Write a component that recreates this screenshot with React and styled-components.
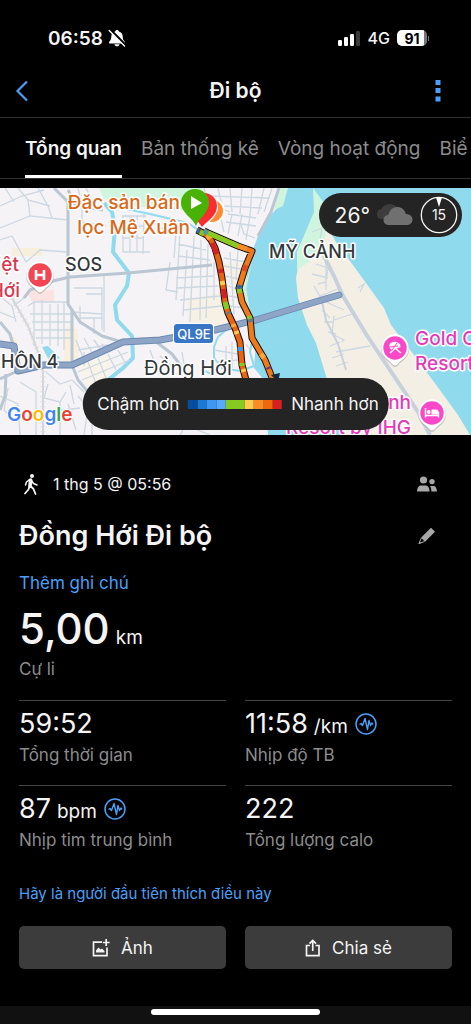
import React from 'react';
import styled, { createGlobalStyle } from 'styled-components';

const GlobalStyle = createGlobalStyle`
  * {
    box-sizing: border-box;
  }

  body {
    margin: 0;
    background: #000;
    color: #f4f4f4;
    font-family: Inter, "Liberation Sans", sans-serif;
  }

  button {
    font: inherit;
    color: inherit;
    background: none;
    border: none;
    padding: 0;
    cursor: pointer;
  }

  svg {
    display: block;
    flex-shrink: 0;
  }
`;

const Page = styled.div`
  display: flex;
  flex-direction: column;
  min-height: 100vh;
  overflow-x: hidden;
`;

const StatusBar = styled.div`
  display: flex;
  justify-content: space-between;
  align-items: center;
  height: 64px;
  padding: 12px 44px 0 48px;
`;

const StatusGroup = styled.div`
  display: flex;
  align-items: center;
  gap: ${(props) => props.$gap}px;
`;

const Clock = styled.span`
  font-size: 19px;
  font-weight: 600;
`;

const Network = styled.span`
  font-size: 16px;
  font-weight: 500;
`;

const Battery = styled.span`
  display: flex;
  align-items: center;
  justify-content: center;
  position: relative;
  width: 30px;
  height: 16px;
  border-radius: 5px;
  background: linear-gradient(to right, #fff 27px, #777 27px);
  color: #000;
  font-size: 14px;
  font-weight: 700;

  &::after {
    content: '';
    position: absolute;
    right: -2px;
    width: 1px;
    height: 5px;
    background: #777;
  }
`;

const Header = styled.header`
  display: grid;
  grid-template-columns: 1fr auto 1fr;
  align-items: center;
  height: 54px;
  padding: 0 30px 0 15px;
  border-bottom: 1px solid #333;

  button:last-child {
    justify-self: end;
  }

  button:first-child {
    justify-self: start;
  }
`;

const HeaderTitle = styled.h1`
  margin: 0;
  padding-left: 15px;
  font-size: 21px;
  line-height: 28px;
  font-weight: 600;
`;

const Tabs = styled.nav`
  display: flex;
  gap: 19px;
  height: 61px;
  padding-left: 25px;
  overflow: hidden;
  border-bottom: 1px solid #333;
`;

const Tab = styled.button`
  flex-shrink: 0;
  padding-top: 3px;
  border-bottom: 3px solid ${(props) => (props.$active ? '#fff' : 'transparent')};
  color: ${(props) => (props.$active ? '#f4f4f4' : '#8c8c8c')};
  font-size: 19px;
  font-weight: ${(props) => (props.$active ? 600 : 400)};
  white-space: nowrap;
`;

const MapBox = styled.section`
  position: relative;
  margin-top: 9px;
  overflow: hidden;
`;

const MapSvg = styled.svg`
  width: 100%;
  height: auto;
`;

const Weather = styled.div`
  position: absolute;
  top: 5px;
  right: 9px;
  display: flex;
  align-items: center;
  gap: 7px;
  height: 44px;
  padding: 0 4px 0 16px;
  border-radius: 22px;
  background: #242424;
  font-size: 21px;
`;

const Legend = styled.div`
  position: absolute;
  left: 50%;
  bottom: 5px;
  transform: translateX(-50%);
  display: flex;
  align-items: center;
  gap: 9px;
  height: 52px;
  padding: 0 10px 0 15px;
  border-radius: 26px;
  background: #242424;
  font-size: 17px;
  white-space: nowrap;
`;

const Scale = styled.div`
  display: flex;
  width: 94px;
  height: 9px;
`;

const ScaleStep = styled.span`
  flex: ${(props) => (props.$wide ? 2 : 1)};
  background: ${(props) => props.$color};
`;

const Content = styled.main`
  display: flex;
  flex-direction: column;
  flex: 1;
  padding: 37px 19px 37px;
`;

const Row = styled.div`
  display: flex;
  align-items: center;
  justify-content: space-between;
  padding-right: 15px;
`;

const TitleRow = styled(Row)`
  margin: 22px 0 17px;
`;

const Meta = styled.div`
  display: flex;
  align-items: center;
  gap: 12px;
  font-size: 16px;
  line-height: 24px;
`;

const ActivityTitle = styled.h2`
  margin: 0;
  font-size: 27px;
  line-height: 36px;
  font-weight: 600;
`;

const TextLink = styled.a`
  align-self: flex-start;
  color: #4aa0f8;
  font-size: ${(props) => (props.$small ? 15 : 17)}px;
  line-height: 24px;
  text-decoration: none;
`;

const Distance = styled.div`
  margin-top: 10px;
  font-size: 42px;
  line-height: 48px;
  font-weight: 500;
`;

const Unit = styled.span`
  margin-left: 6px;
  font-size: 19px;
  line-height: 1;
  font-weight: 400;
`;

const Label = styled.div`
  margin-top: ${(props) => props.$top}px;
  color: #8c8c8c;
  font-size: 17px;
  line-height: 24px;
`;

const Stats = styled.div`
  display: grid;
  grid-template-columns: 1fr 1fr;
  column-gap: 19px;
  margin: 19px 0 12px;
`;

const Stat = styled.div`
  padding: 7px 0 18px;
  border-top: 1px solid #444;
`;

const StatValue = styled.div`
  display: flex;
  align-items: center;
  gap: 7px;
  font-size: 27px;
  line-height: 32px;
`;

const Actions = styled.div`
  display: grid;
  grid-template-columns: 1fr 1fr;
  gap: 19px;
  margin-top: 20px;
`;

const ActionButton = styled.button`
  display: flex;
  align-items: center;
  justify-content: center;
  gap: 11px;
  height: 43px;
  border-radius: 5px;
  background: #3c3c3c;
  font-size: 17px;
`;

const HomeArea = styled.div`
  display: flex;
  justify-content: center;
  height: 18px;
  padding-top: 3px;
  background: #111;
`;

const HomeIndicator = styled.div`
  width: 36%;
  height: 6px;
  border-radius: 3px;
  background: #fff;
`;

const tabs = ['Tổng quan', 'Bản thống kê', 'Vòng hoạt động', 'Biể'];

const scale = [
  { color: '#064d9f' },
  { color: '#1c78d3' },
  { color: '#3f97f2' },
  { color: '#57a9fb' },
  { color: '#86cb22', wide: true },
  { color: '#ffcb4f' },
  { color: '#fb8d27' },
  { color: '#ee690c' },
  { color: '#d51f20' },
];

const stats = [
  { value: '59:52', label: 'Tổng thời gian' },
  { value: '11:58', unit: '/km', pulse: true, label: 'Nhịp độ TB' },
  { value: '87', unit: 'bpm', pulse: true, label: 'Nhịp tim trung bình' },
  { value: '222', label: 'Tổng lượng calo' },
];

const trackWest =
  'M197 230L207 235L211 240L215 248L219 262L222 278L225 302L228 313L235 328L240 342L242 365L246 380';
const trackEast =
  'M204 231L208 233L238 246L252 251L245 268L239 288L242 302L250 318L252 338L265 360L273 380';

// pieces of the track whose pace differs from the base orange
const paceBits = [
  ['M197 230L200 232', '#35628f'],
  ['M200 232L204 234', '#86cb22'],
  ['M207 235L210 239', '#ffa63a'],
  ['M212 243L217 254', '#d51f20'],
  ['M220 269L221 273', '#d51f20'],
  ['M222 281L223 285', '#ffcb4f'],
  ['M223 289L225 298', '#d51f20'],
  ['M225 302L227 309', '#86cb22'],
  ['M228 312L229 314', '#5e7c8c'],
  ['M233 324L234 327', '#ffa63a'],
  ['M236 331L237 334', '#ffcb4f'],
  ['M240 347L240 351', '#3f97f2'],
  ['M242 363L242 366', '#86cb22'],
  ['M243 369L244 372', '#ffcb4f'],
  ['M204 231L208 233', '#4f9ca0'],
  ['M208 233L238 246', '#86cb22'],
  ['M238 246L247 249', '#fb8d27'],
  ['M246 265L244 271', '#e14a16'],
  ['M240 285L239 289', '#2f6aa5'],
  ['M239 289L240 293', '#86cb22'],
  ['M249 316L250 319', '#86cb22'],
  ['M250 319L251 322', '#5e7c8c'],
  ['M261 354L264 358', '#ffa63a'],
  ['M268 367L269 369', '#7a3d70'],
];

const BellOff = () => (
  <svg width="18" height="18" viewBox="0 0 18 18">
    <path
      fill="#fff"
      d="M9 1c-1 0-1.700.6-1.900 1.500C4.700 3.200 3.300 5 3.300 7.600c0 2.600-.6 3.800-2 5.100-.7.700-.4 1.700.6 1.700h14.200c1 0 1.300-1 .6-1.700-1.400-1.300-2-2.500-2-5.100 0-2.600-1.400-4.400-3.800-5.100C10.700 1.600 10 1 9 1zM6.500 15.200h5c-.2 1.300-1.200 2.100-2.500 2.100s-2.300-.8-2.500-2.100z"
    />
    <path d="M2 0.500L17.500 16" stroke="#000" strokeWidth="2.600" />
    <path d="M1.200 1.500L16.500 17" stroke="#fff" strokeWidth="1.400" strokeLinecap="round" />
  </svg>
);

const Signal = () => (
  <svg width="23" height="15" viewBox="0 0 23 15">
    <rect x="0" y="9" width="4" height="6" rx="1.200" fill="#fff" />
    <rect x="6" y="6" width="4" height="9" rx="1.200" fill="#fff" />
    <rect x="12" y="3" width="4" height="12" rx="1.200" fill="#fff" />
    <rect x="18" y="0" width="4" height="15" rx="1.200" fill="#3a3a3a" />
  </svg>
);

const Walker = () => (
  <svg width="22" height="24" viewBox="0 0 22 24" fill="none" stroke="#f4f4f4" strokeLinecap="round" strokeLinejoin="round">
    <circle cx="13" cy="4" r="2" fill="#f4f4f4" stroke="none" />
    <path d="M11.600 8L11 14" strokeWidth="3.600" />
    <path d="M10.500 7.500L7.500 10L6.500 13M12.500 8.500L14.500 11.500L18 13" strokeWidth="1.500" />
    <path d="M10.500 14L9.500 17.500L6 21.500M11.500 14L14.500 17L16.500 22" strokeWidth="1.800" />
  </svg>
);

const People = () => (
  <svg width="20" height="16" viewBox="0 0 20 16" fill="#a8a8a8">
    <circle cx="6.500" cy="4" r="3.600" />
    <circle cx="15" cy="5.600" r="2.700" />
    <path d="M0 15.500c.2-3.600 1.500-6 4-6h5c2.200 0 3.400 2.400 3.600 6z" />
    <path d="M13 10h3.800c1.800 0 2.900 2 3.200 5.500h-5.600c0-2-.4-4-1.400-5.500z" />
  </svg>
);

const Pencil = () => (
  <svg width="20" height="18" viewBox="0 0 20 18" fill="#a8a8a8">
    <path d="M14 .8l4 4L8.300 14.500l-1.500-.4-.6-1.600-1.700-.8-.3-1.300z" />
    <path d="M4.200 11.200L2 16.500l5.600-2" fill="none" stroke="#a8a8a8" />
    <path d="M1.500 17l1-2.600 1.800 1.600z" />
  </svg>
);

const Pulse = () => (
  <svg width="22" height="22" viewBox="0 0 22 22" fill="none" stroke="#4aa0f8">
    <circle cx="11" cy="11" r="10" strokeWidth="1.500" />
    <path
      d="M4.500 11.500l1.500-1 1.500 2 2.500-7 2.500 11L14 7.500l1.500 5L17 10l1 1.500"
      strokeWidth="1.400"
      strokeLinejoin="round"
    />
  </svg>
);

const AddPhoto = () => (
  <svg width="18" height="18" viewBox="0 0 18 18" fill="none" stroke="#f4f4f4" strokeWidth="1.700">
    <path d="M10 3.200H1.500V16.700H15V8.500" />
    <path d="M14.200 0V7M10.800 3.500H17.600" />
    <path d="M4 13.500V11.500L6.500 8.500L8.500 10.500L10 9.500L12.500 12V13.500z" fill="#f4f4f4" stroke="none" />
  </svg>
);

const Share = () => (
  <svg width="16" height="18" viewBox="0 0 16 18" fill="none" stroke="#f4f4f4" strokeWidth="1.700">
    <path d="M5 6.500H1.500V16.700H14V6.500H10.500" />
    <path d="M7.750 12V1.500M4.500 4.700L7.750 1.400L11 4.700" />
  </svg>
);

const Clouds = () => (
  <svg width="36" height="22" viewBox="0 0 36 22">
    <path fill="#3d3d3d" d="M5 15c-3 0-5-2-5-5s2-4.500 4.500-5C6 1.500 9 0 12.500 0c4 0 7 2 8 5l-8 10z" />
    <path fill="#707070" d="M12 21c-3.500 0-5.500-2.200-5.500-5s2-5 5-5.200C12.500 6 16 3 20 3c4.500 0 8 2.700 8.800 7 3.700 0 6.700 2.200 6.700 5.500S33 21 30 21z" />
  </svg>
);

const Compass = () => (
  <svg width="38" height="38" viewBox="0 0 38 38">
    <circle cx="19" cy="19" r="17.700" fill="none" stroke="#f4f4f4" strokeWidth="1.300" />
    <path d="M16 1.500h6L19 11z" fill="#fff" />
    <text x="19" y="24" textAnchor="middle" fontSize="14" fill="#f4f4f4">15</text>
  </svg>
);

const Pin = ({ x, y, color, children }) => (
  <g transform={`translate(${x} ${y})`}>
    <path
      d="M0 18C-2 18-4 14.500-7.500 12A14 14 0 1 1 7.500 12C4 14.500 2 18 0 18z"
      fill="#8a8a8a"
      opacity=".45"
      transform="translate(0 1)"
    />
    <path d="M0 17.500C-2 17.500-4 14-7.500 11.500A13.700 13.700 0 1 1 7.500 11.500C4 14 2 17.500 0 17.500z" fill="#fff" />
    <circle r="11.700" fill={color} />
    {children}
  </g>
);

const MapLabel = styled.text`
  fill: ${(props) => props.$color || '#33373b'};
  stroke: #fff;
  stroke-width: 3px;
  stroke-linejoin: round;
  paint-order: stroke;
  font-size: ${(props) => props.$size || 19}px;
  font-weight: ${(props) => props.$weight || 500};
`;

const ActivityMap = () => (
  <MapSvg viewBox="0 188 471 247" role="img" aria-label="Bản đồ hoạt động">
    <rect x="0" y="188" width="471" height="247" fill="#f5f3f5" />

    {/* parks and built-up blocks */}
    <path d="M99 188L104 199L130 206L165 208L198 212L202 188z" fill="#d0f5df" />
    <path d="M12 248h30v8h-30z" fill="#f6efdc" />
    <path d="M26 290H54V302H32z" fill="#fbe3e3" />
    <path d="M69 322L78 330V365H64V340z" fill="#f8f0dd" />
    <path d="M10 335L18 340L16 352L8 347z" fill="#f8f0dd" />
    <path d="M187 300L222 292L230 330L190 336z" fill="#f7f0e4" />
    <path d="M224 264L250 262L246 290L232 290z" fill="#f7f0e4" />
    <path d="M78 365L110 354V385H86z" fill="#f8f4ea" />

    {/* river, sea and the sand spit */}
    <path
      d="M285 188L280 205L268 218L258 236L252 252L247 270L246 288L250 312L256 340L254 368L264 380L268 435H471V188z"
      fill="#90daed"
    />
    <path d="M279 188H288L283 206L274 210z" fill="#d0f5df" />
    <path d="M252 262L246 290L250 312L246 308L243 290z" fill="#c8f1dc" />
    <path
      d="M300 258L312 235L323 220L336 242L358 272L384 308L391 325L414 355L434 382L458 415L470 435H345L326 376L316 343L307 325L298 298L296 278z"
      fill="#f4efe5"
    />
    <path d="M313 188L329 210L325 238L309 262L297 270L297 252L314 212z" fill="#d0f5df" />

    {/* canals */}
    <g fill="none" stroke="#90daed" strokeLinejoin="round">
      <path d="M104 203L112 212L115 228L113 252L129 273L127 286L115 305L117 320L132 336L133 358L123 368L108 380L104 400" strokeWidth="4" />
      <path d="M112 206L150 214L188 223L200 231" strokeWidth="2" />
      <path d="M226 330L218 337L214 347L214 358L222 368L240 371L254 366L250 352L252 342" strokeWidth="2" />
      <path d="M226 330L238 326M204 370L214 376" strokeWidth="2" />
    </g>
    <path d="M42 347L48 346L60 358L50 362z" fill="#90daed" />

    {/* side streets */}
    <g fill="none" stroke="#ccd8e2" strokeWidth="1.300">
      <path d="M0 206L22 196L44 190M5 188L14 202M18 188L28 200L50 206M28 200L30 216L68 220M0 228L30 216M38 188L48 206L52 218M78 188L82 204L102 210M82 204V222L106 226M86 188L92 200M0 240L12 236L26 262M26 262L40 250L68 252" />
      <path d="M122 216H146M124 226H144M122 238H143M123 216V252M130 216V252M137 216V252M144 214L143 254M123 252H150M116 232L123 234" />
      <path d="M34 302V346M42 300V344M50 304V346M58 304V346M64 302V350M30 314H72M32 322H72M34 330H74M36 338H72M28 306L34 302H68" />
      <path d="M80 306V324M86 294H102V330M94 318V334M80 318H102M74 288H102V300M72 312L102 314M104 276V332" />
      <path d="M76 340L84 360M84 338L94 356M94 340L104 354M102 344L108 352M78 350L108 345M78 372L128 352M82 380L130 360M88 362L96 384M98 358L106 378M108 354L116 370M118 350L126 364M84 352V366" />
      <path d="M0 296L12 306L16 322M0 312L14 318M14 306L26 296M46 372L60 384L72 380L84 392M48 384L44 398L60 402L66 392M60 402V435M48 412L80 408M70 385L74 404M20 382L36 392V435M0 396L18 404L20 435M8 388L4 410L14 420M68 404L76 430M78 396L88 408L84 435M92 412V435" />
      <path d="M180 232L176 300M187 250L183 316M194 236L190 322M201 240L200 320M208 244L206 318M178 244L206 250M178 256L210 260M176 278L214 276M176 288L218 286M180 300L220 296M184 310L222 306M170 262L166 290L178 292M214 262V300M160 228L176 232L174 258" />
      <path d="M204 188L208 202L230 212M218 188L222 206M230 188L232 212M242 188L240 214M252 188L250 216M264 188L258 214M272 188L264 212M208 196L270 198M222 206L262 208M228 214L256 218M226 222L256 226M232 214L228 234M242 214L238 236M250 216L246 240M218 206L224 232" />
      <path d="M224 258L246 262M224 266L246 270M226 276L242 280M228 286L240 290M229 296L241 298M230 306L244 308M230 252L234 314M238 250L236 280M255 238L244 234L240 222" />
      <path d="M214 350L238 354M216 362L238 360M226 346V366M232 342V368M246 344L250 350M182 352L186 376M160 356L172 366M150 350L158 372" />
      <path d="M316 264L328 268L326 282L318 284M312 274L328 278M326 262V290M320 296L340 288M314 286L322 300L344 310M334 316L332 334L344 340L342 342M334 320L352 314M336 352L370 346M322 310L330 318M324 322H334M328 332L336 334M330 346L340 342M332 358L344 354M336 366L348 362M312 232L322 228L320 240M358 288L364 284L360 292M180 435L186 425L210 435" />
    </g>

    {/* railway */}
    <path d="M12 298L28 326L38 352L43 372V435" fill="none" stroke="#d3d5d8" strokeWidth="2" />
    <path d="M12 298L28 326L38 352L43 372V435" fill="none" stroke="#dcdde0" strokeWidth="5" strokeDasharray="1 4" />

    {/* main roads */}
    <g fill="none" stroke="#bac7d3" strokeWidth="3" strokeLinejoin="round">
      <path d="M54 188L68 202L68 290L68 304L80 322L102 336L122 342" />
      <path d="M24 298L30 290L53 281L70 277L128 273L212 265" />
      <path d="M72 310V365L78 380L88 392" />
      <path d="M0 322L10 334L14 348M0 379L20 370M6 374L5 396L0 410" />
      <path d="M68 190L76 206L103 210M155 341L172 354L184 370" />
      <path d="M279 188L271 212L258 236" />
    </g>
    <g fill="none" stroke="#c7d1de" strokeWidth="4">
      <path d="M322 252L334 276L343 296L366 334L390 370L418 412L430 435" />
      <path d="M322 302L326 320L338 344L346 370" strokeWidth="2" />
    </g>

    {/* highway */}
    <path
      d="M0 344L14 346L18 371L44 365L72 365L123 342L160 340L215 330L256 320L315 302L339 295"
      fill="none"
      stroke="#6d89b4"
      strokeWidth="7"
      strokeLinecap="round"
      strokeLinejoin="round"
    />
    <path
      d="M0 344L14 346L18 371L44 365L72 365L123 342L160 340L215 330L256 320L315 302L339 295"
      fill="none"
      stroke="#8fa5c6"
      strokeWidth="5"
      strokeLinecap="round"
      strokeLinejoin="round"
    />

    <rect x="173" y="323" width="41" height="21" rx="3" fill="#fff" />
    <rect x="174" y="324" width="39" height="19" rx="3" fill="#3a76c6" />
    <text x="194" y="339" textAnchor="middle" fontSize="13" fontWeight="500" fill="#fff">QL9E</text>

    <MapLabel $color="#d9691a" x="180" y="209" textAnchor="end">Đặc sản bán</MapLabel>
    <MapLabel $color="#d9691a" x="190" y="234" textAnchor="end">lọc Mệ Xuân</MapLabel>
    <MapLabel $size={18} x="65" y="271">SOS</MapLabel>
    <MapLabel $size={18} x="269" y="258">MỸ CẢNH</MapLabel>
    <MapLabel $size={18} x="1" y="368">HÔN 4</MapLabel>
    <MapLabel $size={20} $weight={400} x="144" y="375">Đồng Hới</MapLabel>
    <MapLabel $color="#d93850" x="19" y="271" textAnchor="end">iệt</MapLabel>
    <MapLabel $color="#d93850" x="20" y="297" textAnchor="end">Hới</MapLabel>
    <MapLabel $color="#e33bb8" x="415" y="345">Gold C</MapLabel>
    <MapLabel $color="#e33bb8" x="415" y="370">Resort</MapLabel>
    <MapLabel $color="#e33bb8" x="411" y="409" textAnchor="end">nh</MapLabel>
    <MapLabel $color="#e33bb8" x="411" y="434" textAnchor="end">Resort by IHG</MapLabel>

    <Pin x={40} y={275} color="#f44552">
      <path d="M-4 -5V5M4 -5V5M-4 0H4" stroke="#fff" strokeWidth="2.600" fill="none" />
    </Pin>
    <Pin x={395} y={348} color="#fa49c8">
      <path d="M-6 -3C-3 -7 2 -7 5 -3L-2 3C-5 2-7 0-6 -3z" fill="#fff" transform="rotate(20)" />
      <path d="M-5 5L5 -4M1 1L6 5" stroke="#fff" strokeWidth="1.500" />
      <path d="M-3 2L2 -5M-5 -1L3 -2" stroke="#fa49c8" />
    </Pin>
    <Pin x={432} y={413} color="#fa49c8">
      <path d="M-6.500 -5V4.500M-6.500 2.500H6.500M6.500 4.500V-1" stroke="#fff" strokeWidth="1.400" />
      <path d="M-.5 -3.500H4.500Q6.500 -3.500 6.500 -1.500V1.500H-.5z" fill="#fff" />
      <circle cx="-3.300" cy="-1" r="1.900" fill="#fff" />
    </Pin>

    {/* recorded route, coloured by pace */}
    <g fill="none" strokeLinejoin="round">
      <path d={trackEast} stroke="#111" strokeWidth="7" />
      <path d={trackWest} stroke="#111" strokeWidth="7" />
      <path d={trackEast} stroke="#ee7a1c" strokeWidth="5" />
      <path d={trackWest} stroke="#ea640f" strokeWidth="5" />
      {paceBits.map(([d, color]) => (
        <path key={d} d={d} stroke={color} strokeWidth="5" />
      ))}
    </g>
    <path d="M271 375L280 373L278 382z" fill="#152a3c" />

    {/* finish and start markers */}
    <circle cx="212" cy="211" r="13" fill="#fff" />
    <circle cx="212" cy="211" r="11" fill="#ff8a35" />
    <path d="M203 229C199 222 192 216 192 207A13 13 0 0 1 218 207C218 216 209 221 203 229z" fill="#fff" />
    <path d="M202 227C199 222 191 216 191 206A13 13 0 0 1 217 206C217 216 208 220 202 227z" fill="#f82d32" />
    <path d="M196 226C194 219 181 213 181 203A14 14 0 0 1 209 203C209 213 198 219 196 226z" fill="#48b207" />
    <path d="M191 196L202 203L191 209z" fill="#fff" />

    <g fontSize="19" fontWeight="600" stroke="#fff" strokeWidth="2" paintOrder="stroke">
      <text x="7" y="421">
        <tspan fill="#4285f4">G</tspan>
        <tspan fill="#ea4335">o</tspan>
        <tspan fill="#fbbc05">o</tspan>
        <tspan fill="#4285f4">g</tspan>
        <tspan fill="#34a853">l</tspan>
        <tspan fill="#ea4335">e</tspan>
      </text>
    </g>
  </MapSvg>
);

const App = () => {
  return (
    <>
      <GlobalStyle />
      <Page>
        <StatusBar>
          <StatusGroup $gap={5}>
            <Clock>06:58</Clock>
            <BellOff />
          </StatusGroup>
          <StatusGroup $gap={7}>
            <Signal />
            <Network>4G</Network>
            <Battery>91</Battery>
          </StatusGroup>
        </StatusBar>
        <Header>
          <button type="button" aria-label="Quay lại">
            <svg width="14" height="22" viewBox="0 0 14 22">
              <path d="M12 1.500L2.500 11L12 20.500" fill="none" stroke="#4aa0f8" strokeWidth="2.200" />
            </svg>
          </button>
          <HeaderTitle>Đi bộ</HeaderTitle>
          <button type="button" aria-label="Tùy chọn">
            <svg width="6" height="22" viewBox="0 0 6 22" fill="#4aa0f8">
              <path d="M0.500 0h5v5h-5zM0.500 8h5v5h-5zM0.500 16.500h5v5h-5z" />
            </svg>
          </button>
        </Header>
        <Tabs>
          {tabs.map((name, i) => (
            <Tab key={name} type="button" $active={i === 0}>{name}</Tab>
          ))}
        </Tabs>
        <MapBox>
          <ActivityMap />
          <Weather>
            26°
            <Clouds />
            <Compass />
          </Weather>
          <Legend>
            Chậm hơn
            <Scale>
              {scale.map((step) => (
                <ScaleStep key={step.color} $color={step.color} $wide={step.wide} />
              ))}
            </Scale>
            Nhanh hơn
          </Legend>
        </MapBox>
        <Content>
          <Row>
            <Meta>
              <Walker />
              1 thg 5 @ 05:56
            </Meta>
            <button type="button" aria-label="Quyền riêng tư">
              <People />
            </button>
          </Row>
          <TitleRow>
            <ActivityTitle>Đồng Hới Đi bộ</ActivityTitle>
            <button type="button" aria-label="Chỉnh sửa">
              <Pencil />
            </button>
          </TitleRow>
          <TextLink href="#note">Thêm ghi chú</TextLink>
          <Distance>
            5,00
            <Unit>km</Unit>
          </Distance>
          <Label $top={4}>Cự li</Label>
          <Stats>
            {stats.map((stat) => (
              <Stat key={stat.label}>
                <StatValue>
                  <span>
                    {stat.value}
                    {stat.unit && <Unit>{stat.unit}</Unit>}
                  </span>
                  {stat.pulse && <Pulse />}
                </StatValue>
                <Label $top={3}>{stat.label}</Label>
              </Stat>
            ))}
          </Stats>
          <TextLink $small href="#like">Hãy là người đầu tiên thích điều này</TextLink>
          <Actions>
            <ActionButton type="button">
              <AddPhoto />
              Ảnh
            </ActionButton>
            <ActionButton type="button">
              <Share />
              Chia sẻ
            </ActionButton>
          </Actions>
        </Content>
        <HomeArea>
          <HomeIndicator />
        </HomeArea>
      </Page>
    </>
  );
};

export default App;
